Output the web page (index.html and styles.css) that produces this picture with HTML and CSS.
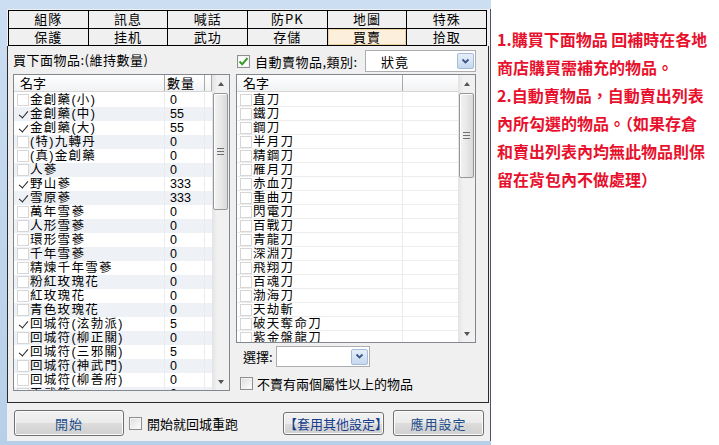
FILE: index.html
```html
<!DOCTYPE html>
<html lang="zh-Hant">

<head>
  <meta charset="UTF-8">
  <meta name="viewport" content="width=device-width, initial-scale=1.0">
  <title>買賣設定</title>

  <link rel="stylesheet" href="styles.css">

</head>

<body>

  <div class="page">
    <div class="window">
      <div class="dialog">

        <!-- tabs -->
        <div class="tabs">
          <div class="tab">組隊</div>
          <div class="tab">訊息</div>
          <div class="tab">喊話</div>
          <div class="tab">防PK</div>
          <div class="tab">地圖</div>
          <div class="tab">特殊</div>
          <div class="tab">保護</div>
          <div class="tab">挂机</div>
          <div class="tab">武功</div>
          <div class="tab">存儲</div>
          <div class="tab active">買賣</div>
          <div class="tab">拾取</div>
        </div>

        <div class="panel">

          <!-- buy list -->
          <div class="col">
            <div class="caption">買下面物品:(維持數量)</div>
            <div class="list buy-list">
              <div class="list-main">
                <div class="list-head">
                  <span class="h-name">名字</span>
                  <span class="h-qty">數量</span>
                  <span class="h-pad"></span>
                </div>
                <div class="list-body">
                  <div class="row"><span class="c-name"><span class="cb"></span>金創藥(小)</span><span class="c-qty">0</span><span class="c-pad"></span></div>
                  <div class="row"><span class="c-name"><span class="cb on"></span>金創藥(中)</span><span class="c-qty">55</span><span class="c-pad"></span></div>
                  <div class="row"><span class="c-name"><span class="cb on"></span>金創藥(大)</span><span class="c-qty">55</span><span class="c-pad"></span></div>
                  <div class="row"><span class="c-name"><span class="cb"></span>(特)九轉丹</span><span class="c-qty">0</span><span class="c-pad"></span></div>
                  <div class="row"><span class="c-name"><span class="cb"></span>(真)金創藥</span><span class="c-qty">0</span><span class="c-pad"></span></div>
                  <div class="row"><span class="c-name"><span class="cb"></span>人蔘</span><span class="c-qty">0</span><span class="c-pad"></span></div>
                  <div class="row"><span class="c-name"><span class="cb on"></span>野山蔘</span><span class="c-qty">333</span><span class="c-pad"></span></div>
                  <div class="row"><span class="c-name"><span class="cb on"></span>雪原蔘</span><span class="c-qty">333</span><span class="c-pad"></span></div>
                  <div class="row"><span class="c-name"><span class="cb"></span>萬年雪蔘</span><span class="c-qty">0</span><span class="c-pad"></span></div>
                  <div class="row"><span class="c-name"><span class="cb"></span>人形雪蔘</span><span class="c-qty">0</span><span class="c-pad"></span></div>
                  <div class="row"><span class="c-name"><span class="cb"></span>環形雪蔘</span><span class="c-qty">0</span><span class="c-pad"></span></div>
                  <div class="row"><span class="c-name"><span class="cb"></span>千年雪蔘</span><span class="c-qty">0</span><span class="c-pad"></span></div>
                  <div class="row"><span class="c-name"><span class="cb"></span>精煉千年雪蔘</span><span class="c-qty">0</span><span class="c-pad"></span></div>
                  <div class="row"><span class="c-name"><span class="cb"></span>粉紅玫瑰花</span><span class="c-qty">0</span><span class="c-pad"></span></div>
                  <div class="row"><span class="c-name"><span class="cb"></span>紅玫瑰花</span><span class="c-qty">0</span><span class="c-pad"></span></div>
                  <div class="row"><span class="c-name"><span class="cb"></span>青色玫瑰花</span><span class="c-qty">0</span><span class="c-pad"></span></div>
                  <div class="row"><span class="c-name"><span class="cb on"></span>回城符(泫勃派)</span><span class="c-qty">5</span><span class="c-pad"></span></div>
                  <div class="row"><span class="c-name"><span class="cb"></span>回城符(柳正關)</span><span class="c-qty">0</span><span class="c-pad"></span></div>
                  <div class="row"><span class="c-name"><span class="cb on"></span>回城符(三邪關)</span><span class="c-qty">5</span><span class="c-pad"></span></div>
                  <div class="row"><span class="c-name"><span class="cb"></span>回城符(神武門)</span><span class="c-qty">0</span><span class="c-pad"></span></div>
                  <div class="row"><span class="c-name"><span class="cb"></span>回城符(柳善府)</span><span class="c-qty">0</span><span class="c-pad"></span></div>
                  <div class="row"><span class="c-name"><span class="cb"></span>王武符</span><span class="c-qty">0</span><span class="c-pad"></span></div>
                </div>
              </div>
              <div class="sbar">
                <div class="sb-btn"><span class="arrow up"></span></div>
                <div class="sb-thumb"><span class="grip"></span></div>
                <div class="sb-track"></div>
                <div class="sb-btn"><span class="arrow down"></span></div>
              </div>
            </div>
          </div>

          <!-- sell list -->
          <div class="col">
            <div class="sell-head">
              <span class="box checked">
                <svg width="11" height="11" viewBox="0 0 11 11"><polyline points="1.5,5.5 4.2,8.3 9.5,2" fill="none" stroke="#3a9a2c" stroke-width="2"/></svg>
              </span>
              <span class="sell-label">自動賣物品,類別:</span>
              <div class="select type-select">
                <span class="select-text">狀竟</span>
                <span class="drop">
                  <svg width="9" height="7" viewBox="0 0 9 7"><polyline points="1.5,1.5 4.5,4.5 7.5,1.5" fill="none" stroke="#3b5787" stroke-width="1.8"/></svg>
                </span>
              </div>
            </div>

            <div class="list sell-list">
              <div class="list-main">
                <div class="list-head">
                  <span class="h-name">名字</span>
                  <span class="h-pad"></span>
                </div>
                <div class="list-body">
                  <div class="row"><span class="c-name"><span class="cb"></span>直刀</span><span class="c-pad"></span></div>
                  <div class="row"><span class="c-name"><span class="cb"></span>鐵刀</span><span class="c-pad"></span></div>
                  <div class="row"><span class="c-name"><span class="cb"></span>鋼刀</span><span class="c-pad"></span></div>
                  <div class="row"><span class="c-name"><span class="cb"></span>半月刀</span><span class="c-pad"></span></div>
                  <div class="row"><span class="c-name"><span class="cb"></span>精鋼刀</span><span class="c-pad"></span></div>
                  <div class="row"><span class="c-name"><span class="cb"></span>雁月刀</span><span class="c-pad"></span></div>
                  <div class="row"><span class="c-name"><span class="cb"></span>赤血刀</span><span class="c-pad"></span></div>
                  <div class="row"><span class="c-name"><span class="cb"></span>重曲刀</span><span class="c-pad"></span></div>
                  <div class="row"><span class="c-name"><span class="cb"></span>閃電刀</span><span class="c-pad"></span></div>
                  <div class="row"><span class="c-name"><span class="cb"></span>百戰刀</span><span class="c-pad"></span></div>
                  <div class="row"><span class="c-name"><span class="cb"></span>青龍刀</span><span class="c-pad"></span></div>
                  <div class="row"><span class="c-name"><span class="cb"></span>深淵刀</span><span class="c-pad"></span></div>
                  <div class="row"><span class="c-name"><span class="cb"></span>飛翔刀</span><span class="c-pad"></span></div>
                  <div class="row"><span class="c-name"><span class="cb"></span>百魂刀</span><span class="c-pad"></span></div>
                  <div class="row"><span class="c-name"><span class="cb"></span>渤海刀</span><span class="c-pad"></span></div>
                  <div class="row"><span class="c-name"><span class="cb"></span>天劫斬</span><span class="c-pad"></span></div>
                  <div class="row"><span class="c-name"><span class="cb"></span>破天奪命刀</span><span class="c-pad"></span></div>
                  <div class="row"><span class="c-name"><span class="cb"></span>紫金盤龍刀</span><span class="c-pad"></span></div>
                </div>
              </div>
              <div class="sbar">
                <div class="sb-btn"><span class="arrow up"></span></div>
                <div class="sb-thumb"><span class="grip"></span></div>
                <div class="sb-track"></div>
                <div class="sb-btn"><span class="arrow down"></span></div>
              </div>
            </div>

            <div class="pick">
              <span>選擇:</span>
              <div class="select pick-select">
                <span class="select-text"></span>
                <span class="drop">
                  <svg width="9" height="7" viewBox="0 0 9 7"><polyline points="1.5,1.5 4.5,4.5 7.5,1.5" fill="none" stroke="#3b5787" stroke-width="1.8"/></svg>
                </span>
              </div>
            </div>

            <div class="check-line">
              <span class="box"></span>
              <span>不賣有兩個屬性以上的物品</span>
            </div>
          </div>

        </div>

        <!-- bottom buttons -->
        <div class="actions">
          <button class="btn btn-start">開始</button>
          <div class="check-line restart">
            <span class="box"></span>
            <span>開始就回城重跑</span>
          </div>
          <button class="btn btn-other">【套用其他設定】</button>
          <button class="btn btn-apply">應用設定</button>
        </div>

      </div>
    </div>

    <div class="note">
      <div>1.購買下面物品 回補時在各地</div>
      <div>商店購買需補充的物品。</div>
      <div>2.自動賣物品，自動賣出列表</div>
      <div>內所勾選的物品。（如果存倉</div>
      <div>和賣出列表內均無此物品則保</div>
      <div>留在背包內不做處理）</div>
    </div>
  </div>

</body>

</html>
```

FILE: styles.css
```css
* {
  box-sizing: border-box;
}

body {
  margin: 0;
  background-color: white;
  font-family: "Noto Sans CJK TC", "Liberation Sans", sans-serif;
  font-size: 13px;
  color: black;
}

.page {
  display: flex;
  width: 719px;
  height: 445px;
  overflow: hidden;
}

/* window frame */
.window {
  flex: none;
  width: 491px;
  height: 445px;
  padding: 9px 0 4px 7px;
  background: linear-gradient(#cbdef2, #b7cfe9);
}

.dialog {
  display: flex;
  flex-direction: column;
  height: 432px;
  background-color: #f0f0f0;
  border-right: 1px solid #4a5462;
}

/* tabs */
.tabs {
  display: grid;
  grid-template-columns: repeat(6, 1fr);
  grid-template-rows: 17px 16px;
  gap: 1px;
  width: 479px;
  margin: 1px 0 0 1px;
  padding: 1px;
  background-color: black;
}

.tab {
  background-color: #f0f0f0;
  text-align: center;
  line-height: 16px;
  letter-spacing: 1px;
}

.tab.active {
  background-color: #fcf0dd;
  box-shadow: inset 0 0 0 1px #efd2a4;
}

/* main panel */
.panel {
  display: grid;
  grid-template-columns: 217px 240px;
  column-gap: 6px;
  width: 482px;
  height: 357px;
  padding-left: 5px;
  border: 1px solid #2b2b2b;
  border-top: none;
}

.col {
  display: flex;
  flex-direction: column;
}

.caption {
  height: 28px;
  padding-top: 5px;
  line-height: 18px;
  letter-spacing: 0.5px;
}

/* list view */
.list {
  display: flex;
  border: 1px solid #828790;
  background-color: white;
}

.buy-list {
  height: 317px;
}

.sell-list {
  height: 269px;
}

.list-main {
  display: flex;
  flex-direction: column;
  flex: 1;
  min-width: 0;
}

.list-head {
  display: flex;
  flex: none;
  height: 17px;
  background: linear-gradient(#ffffff, #f1f2f4);
  border-bottom: 1px solid #d5d5d5;
  line-height: 16px;
}

.list-head span {
  border-right: 1px solid #a9a9a9;
}

.h-name {
  width: 151px;
  padding-left: 6px;
}

.h-qty {
  width: 40px;
  padding-left: 2px;
  letter-spacing: 1px;
}

.h-pad {
  flex: 1;
}

.sell-list .h-name {
  width: 166px;
}

.sell-list .h-pad {
  border-right: none !important;
}

.list-body {
  flex: 1;
  min-height: 0;
  padding-top: 1px;
  overflow: hidden;
  font-family: "Liberation Sans", "Noto Sans CJK TC", sans-serif;
  font-size: 12.5px;
}

.row {
  display: flex;
  height: 14px;
  line-height: 14px;
  white-space: nowrap;
}

.buy-list .row:nth-child(even) {
  background-color: #eef1f5;
}

.sell-list .row {
  border-bottom: 1px solid #ededed;
}

.c-name {
  display: flex;
  align-items: center;
  width: 151px;
  border-right: 1px solid #ececec;
  letter-spacing: 1.3px;
}

.sell-list .c-name {
  width: 166px;
}

.c-qty {
  width: 40px;
  padding-left: 5px;
  border-right: 1px solid #ececec;
}

.c-pad {
  flex: 1;
}

.cb {
  flex: none;
  position: relative;
  width: 12px;
  height: 12px;
  margin: 0 1px 0 3px;
  border: 1px solid #d6d6d6;
  background-color: white;
}

.cb.on {
  border-color: transparent;
  background-color: transparent;
}

.cb.on::after {
  content: "";
  position: absolute;
  left: 3px;
  top: 0;
  width: 4px;
  height: 8px;
  border-right: 1.5px solid #222;
  border-bottom: 1.5px solid #222;
  transform: rotate(40deg);
}

/* scrollbar */
.sbar {
  display: flex;
  flex-direction: column;
  flex: none;
  width: 17px;
  background: linear-gradient(to right, #e3e3e3, #f1f1f1 30%, #f1f1f1);
}

.sb-btn {
  display: flex;
  align-items: center;
  justify-content: center;
  height: 17px;
}

.arrow {
  width: 0;
  height: 0;
  border-left: 3.5px solid transparent;
  border-right: 3.5px solid transparent;
}

.arrow.up {
  border-bottom: 4px solid #555;
}

.arrow.down {
  border-top: 4px solid #555;
}

.sb-thumb {
  display: flex;
  align-items: center;
  justify-content: center;
  margin: 1px 1px 0;
  border: 1px solid #979797;
  border-radius: 2px;
  background: linear-gradient(to right, #f4f4f4, #e8e8e8 50%, #d9d9d9);
  box-shadow: inset 1px 1px 0 #fdfdfd;
}

.buy-list .sb-thumb {
  height: 117px;
}

.sell-list .sb-thumb {
  height: 85px;
}

.grip {
  width: 7px;
  height: 7px;
  background: repeating-linear-gradient(#6f6f6f 0 1px, transparent 1px 3px);
}

.sb-track {
  flex: 1;
}

/* sell header */
.sell-head {
  display: flex;
  align-items: center;
  height: 28px;
  padding: 4px 0 2px;
}

.sell-head .box {
  margin-left: 1px;
}

.sell-label {
  margin-left: 5px;
  letter-spacing: 0.5px;
}

.box {
  flex: none;
  display: flex;
  align-items: center;
  justify-content: center;
  width: 13px;
  height: 13px;
  border: 1px solid #8e8f8f;
  background: linear-gradient(135deg, #dcdcdc, #ffffff);
  box-shadow: inset 0 0 0 1px #f4f4f4;
}

.box.checked {
  background: white;
}

.select {
  display: flex;
  align-items: center;
  height: 22px;
  border: 1px solid #abadb3;
  background-color: white;
}

.type-select {
  width: 111px;
  margin-left: auto;
}

.select-text {
  flex: 1;
  padding-left: 15px;
  letter-spacing: 1px;
}

.drop {
  display: flex;
  align-items: center;
  justify-content: center;
  width: 17px;
  height: 16px;
  margin-right: 1px;
  border: 1px solid #a4bbd9;
  border-radius: 2px;
  background: linear-gradient(#e6eff9, #c6d8ef);
}

.pick {
  display: flex;
  align-items: center;
  height: 21px;
  margin-top: 3px;
  padding-left: 7px;
}

.pick-select {
  width: 94px;
  height: 21px;
  margin-left: 3px;
}

.check-line {
  display: flex;
  align-items: center;
  gap: 4px;
  height: 17px;
  margin-top: 8px;
  padding-left: 4px;
}

/* bottom buttons */
.actions {
  display: flex;
  align-items: flex-start;
  height: 38px;
  padding: 7px 6px 0 7px;
}

.btn {
  height: 26px;
  padding: 0;
  border: 1px solid #707070;
  border-radius: 3px;
  background: linear-gradient(#f2f2f2, #ebebeb 50%, #dddddd 51%, #cfcfcf);
  box-shadow: inset 0 0 0 1px #fbfbfb;
  font-family: inherit;
  font-size: 13px;
  color: #1f4e8a;
  letter-spacing: 1px;
}

.btn-start {
  width: 110px;
}

.restart {
  margin: 5px 0 0 0;
  padding-left: 5px;
  gap: 5px;
}

.btn-other {
  width: 101px;
  height: 23px;
  margin: 2px 0 0 auto;
  color: #163d8c;
  letter-spacing: 0;
}

.btn-apply {
  width: 91px;
  margin-left: 9px;
}

/* right note */
.note {
  flex: none;
  padding: 25px 0 0 6px;
  font-size: 16px;
  font-weight: bold;
  line-height: 28px;
  color: #e8112d;
  white-space: nowrap;
}
```
